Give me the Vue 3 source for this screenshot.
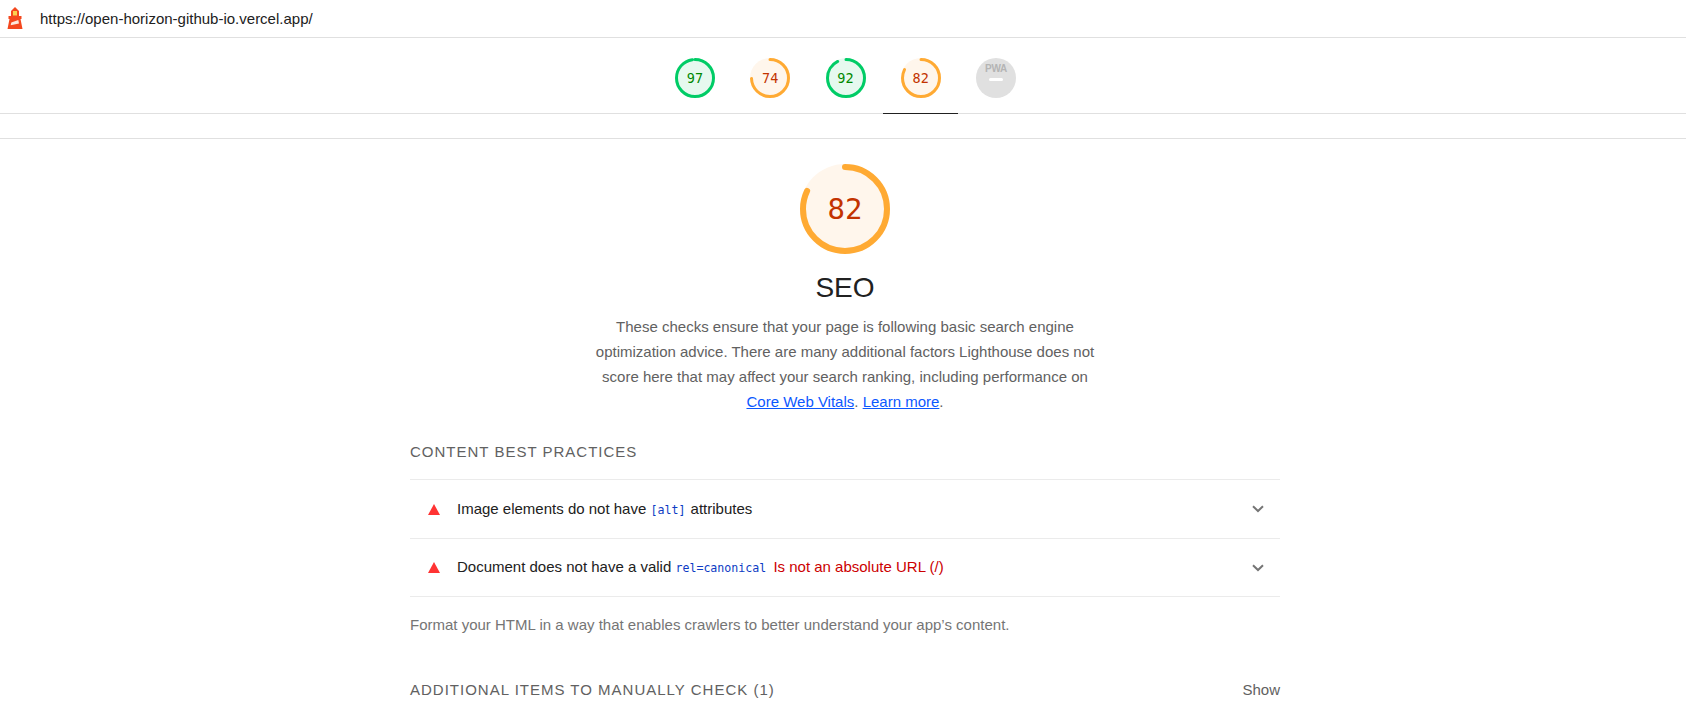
<script setup>
const gauges = [
  { score: 97, level: 'pass' },
  { score: 74, level: 'average' },
  { score: 92, level: 'pass' },
  { score: 82, level: 'average', active: true },
]
const circ = 2 * Math.PI * 18.5
const bigCirc = 2 * Math.PI * 42
</script>

<template>
  <div class="report">
    <header class="topbar">
      <svg class="logo" viewBox="0 0 16 22" width="16" height="22">
        <path fill="#f4481e" d="M4 4 8 0l4 4v6H4z" />
        <path fill="#fbd24e" d="M6 4h4v4.500H6z" />
        <path fill="#f4481e" d="M1.500 9h13v3h-1l2 10H.5l2-10h-1z" />
        <path fill="#fde9dc" d="M4.300 15.500l7-2.500 .7 3.500-8.300 1.700z" />
      </svg>
      <span class="url">https://open-horizon-github-io.vercel.app/</span>
    </header>

    <nav class="gauges">
      <a v-for="g in gauges" :key="g.score" class="gauge-link" :class="{ active: g.active }">
        <span class="gauge" :class="g.level">
          <svg viewBox="0 0 40 40" width="40" height="40">
            <circle class="fill" cx="20" cy="20" r="20" />
            <circle
              class="arc"
              cx="20"
              cy="20"
              r="18.500"
              stroke-width="3"
              stroke-linecap="round"
              :stroke-dasharray="`${(g.score / 100) * circ} ${circ}`"
              transform="rotate(-90 20 20)"
            />
          </svg>
          <span class="gauge-num">{{ g.score }}</span>
        </span>
      </a>
      <a class="gauge-link">
        <span class="gauge pwa">
          <span class="pwa-label">PWA</span>
          <span class="pwa-dash"></span>
        </span>
      </a>
    </nav>
    <div class="strip"></div>

    <main class="content">
      <div class="big-gauge average">
        <svg viewBox="0 0 90 90" width="90" height="90">
          <circle class="fill" cx="45" cy="45" r="45" />
          <circle
            class="arc"
            cx="45"
            cy="45"
            r="42"
            stroke-width="6"
            stroke-linecap="round"
            :stroke-dasharray="`${0.82 * bigCirc} ${bigCirc}`"
            transform="rotate(-90 45 45)"
          />
        </svg>
        <span class="big-num">82</span>
      </div>
      <h1 class="title">SEO</h1>
      <p class="desc">
        These checks ensure that your page is following basic search engine optimization advice. There are many additional factors Lighthouse does not score here that may affect your search ranking, including performance on
        <a class="link">Core Web Vitals</a>. <a class="link">Learn more</a>.
      </p>

      <section class="group">
        <h2 class="group-title">Content Best Practices</h2>
        <div class="audit">
          <span class="tri"></span>
          <span class="audit-text">Image elements do not have <code>[alt]</code> attributes</span>
          <svg class="chev" viewBox="0 0 12 8" width="12" height="8"><path d="M1 1.200 6 6l5-4.800" /></svg>
        </div>
        <div class="audit">
          <span class="tri"></span>
          <span class="audit-text">Document does not have a valid <code>rel=canonical</code> <span class="err">Is not an absolute URL (/)</span></span>
          <svg class="chev" viewBox="0 0 12 8" width="12" height="8"><path d="M1 1.200 6 6l5-4.800" /></svg>
        </div>
        <p class="group-desc">Format your HTML in a way that enables crawlers to better understand your app’s content.</p>
      </section>

      <div class="manual">
        <h2 class="group-title">Additional items to manually check (1)</h2>
        <span class="show">Show</span>
      </div>
    </main>
  </div>
</template>

<style>
html, body {
  margin: 0;
  background: #fff;
  overflow: hidden;
}
</style>

<style scoped>
.report {
  height: 703px;
  overflow: hidden;
  font-family: "Liberation Sans", Arial, sans-serif;
  color: #212121;
}
.topbar {
  height: 37px;
  display: flex;
  align-items: center;
  padding-left: 7px;
  border-bottom: 1px solid #e0e0e0;
}
.logo {
  margin-top: -2px;
  margin-right: 17px;
}
.url {
  font-size: 15px;
  color: #212121;
}
.gauges {
  height: 75px;
  display: flex;
  justify-content: center;
  padding-left: 5px;
  border-bottom: 1px solid #e0e0e0;
}
.gauge-link {
  width: 75.250px;
  display: flex;
  justify-content: center;
  padding-top: 20px;
  box-sizing: border-box;
  height: 76px;
  border-bottom: 1px solid transparent;
}
.gauge-link.active {
  border-bottom-color: #212121;
}
.gauge {
  position: relative;
  width: 40px;
  height: 40px;
  display: block;
}
.gauge svg {
  display: block;
}
.gauge-num {
  position: absolute;
  inset: 0;
  display: flex;
  align-items: center;
  justify-content: center;
  font-family: "DejaVu Sans Mono", monospace;
  font-size: 13.500px;
}
.pass .fill { fill: #e6f9ef; }
.pass .arc { stroke: #00cc66; fill: none; }
.pass .gauge-num { color: #008800; }
.average .fill { fill: #fff6ec; }
.average .arc { stroke: #ffaa33; fill: none; }
.average .gauge-num,
.average .big-num { color: #c33300; }
.pwa {
  background: #e0e0e0;
  border-radius: 50%;
}
.pwa-label {
  position: absolute;
  top: 5px;
  left: 0;
  right: 0;
  text-align: center;
  font-size: 10px;
  font-weight: 700;
  letter-spacing: -0.2px;
  color: #b4b4b4;
}
.pwa-dash {
  position: absolute;
  top: 20px;
  left: 13px;
  width: 14px;
  height: 3px;
  border-radius: 2px;
  background: #fff;
}
.strip {
  height: 24px;
  border-bottom: 1px solid #e0e0e0;
}
.content {
  width: 870px;
  margin: 0 auto;
  padding-left: 4px;
  display: flex;
  flex-direction: column;
  align-items: center;
}
.big-gauge {
  position: relative;
  width: 90px;
  height: 90px;
  margin-top: 25px;
}
.big-gauge svg {
  display: block;
}
.big-num {
  position: absolute;
  inset: 0;
  display: flex;
  align-items: center;
  justify-content: center;
  font-family: "DejaVu Sans Mono", monospace;
  font-size: 29px;
}
.title {
  margin: 16px 0 0;
  font-size: 28px;
  font-weight: 400;
  line-height: 36px;
}
.desc {
  width: 510px;
  margin: 8px 0 0;
  font-size: 15px;
  line-height: 25px;
  text-align: center;
  color: #616161;
}
.link {
  color: #0b57ff;
  text-decoration: underline;
}
.group {
  width: 100%;
  margin-top: 28px;
}
.group-title {
  margin: 0;
  font-size: 15px;
  font-weight: 400;
  line-height: 20px;
  letter-spacing: 1px;
  text-transform: uppercase;
  color: #616161;
}
.group > .group-title {
  padding-bottom: 17px;
  border-bottom: 1px solid #ebebeb;
}
.audit {
  height: 58px;
  display: flex;
  align-items: center;
  border-bottom: 1px solid #ebebeb;
}
.audit + .audit {
  height: 57px;
}
.tri {
  width: 0;
  height: 0;
  margin-left: 18px;
  margin-right: 17px;
  border-left: 6px solid transparent;
  border-right: 6px solid transparent;
  border-bottom: 11px solid #ff3333;
}
.audit-text {
  flex: 1;
  font-size: 15px;
  color: #212121;
  padding-bottom: 2px;
}
code {
  font-family: "DejaVu Sans Mono", monospace;
  font-size: 11.600px;
  color: #0d3bc4;
  margin-right: 1px;
}
.err {
  margin-left: 2px;
  color: #cc0000;
}
.chev {
  margin-right: 16px;
  fill: none;
  stroke: #757575;
  stroke-width: 2;
}
.group-desc {
  margin: 17px 0 0;
  font-size: 15px;
  line-height: 22px;
  color: #757575;
}
.manual {
  width: 100%;
  margin-top: 44px;
  display: flex;
  justify-content: space-between;
  align-items: center;
}
.show {
  font-size: 15px;
  color: #616161;
  padding-bottom: 2px;
}
</style>
